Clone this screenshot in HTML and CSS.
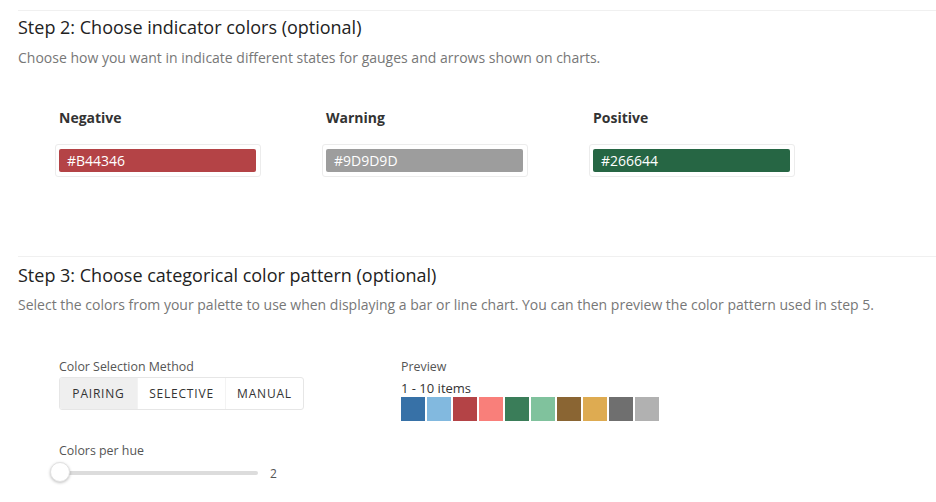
FILE: index.html
```html
<!DOCTYPE html>
<html>
<head>
<meta charset="utf-8">
<link rel="stylesheet" href="styles.css">
</head>
<body>
<div class="page">
  <section class="step step-first">
    <h2 class="step-title">Step 2: Choose indicator colors (optional)</h2>
    <p class="step-desc">Choose how you want in indicate different states for gauges and arrows shown on charts.</p>
    <div class="indicators">
      <div class="indicator">
        <div class="ind-label">Negative</div>
        <div class="ind-box"><div class="ind-swatch" style="background:#B44346">#B44346</div></div>
      </div>
      <div class="indicator">
        <div class="ind-label">Warning</div>
        <div class="ind-box"><div class="ind-swatch" style="background:#9D9D9D">#9D9D9D</div></div>
      </div>
      <div class="indicator">
        <div class="ind-label">Positive</div>
        <div class="ind-box"><div class="ind-swatch" style="background:#266644">#266644</div></div>
      </div>
    </div>
  </section>
  <section class="step step-second">
    <h2 class="step-title">Step 3: Choose categorical color pattern (optional)</h2>
    <p class="step-desc">Select the colors from your palette to use when displaying a bar or line chart. You can then preview the color pattern used in step 5.</p>
    <div class="controls">
      <div class="left-col">
        <div class="field-label">Color Selection Method</div>
        <div class="segmented">
          <div class="seg seg-active">PAIRING</div>
          <div class="seg">SELECTIVE</div>
          <div class="seg">MANUAL</div>
        </div>
        <div class="field-label field-label-gap">Colors per hue</div>
        <div class="slider-row">
          <div class="slider">
            <div class="track"></div>
            <div class="thumb"></div>
          </div>
          <div class="slider-value">2</div>
        </div>
      </div>
      <div class="right-col">
        <div class="field-label">Preview</div>
        <div class="items">1 - 10 items</div>
        <div class="palette">
          <span class="chip" style="background:#3771A7"></span>
          <span class="chip" style="background:#82B9DF"></span>
          <span class="chip" style="background:#B44346"></span>
          <span class="chip" style="background:#F97F7A"></span>
          <span class="chip" style="background:#3A7D59"></span>
          <span class="chip" style="background:#80C29D"></span>
          <span class="chip" style="background:#8A6533"></span>
          <span class="chip" style="background:#DEAB51"></span>
          <span class="chip" style="background:#6F6F6F"></span>
          <span class="chip" style="background:#B1B1B1"></span>
        </div>
      </div>
    </div>
  </section>
</div>
</body>
</html>
```

FILE: styles.css
```css
* { box-sizing: border-box; }
html, body { margin: 0; padding: 0; background: #fff; }
body {
  font-family: "Open Sans", "Noto Sans", sans-serif;
  color: #333;
  width: 936px;
  height: 502px;
  overflow: hidden;
}
.page { padding-top: 10px; }
.step {
  border-top: 1px solid #f0f0f0;
  margin-left: 18px;
}
.step-second { margin-top: 79px; }
.step-title {
  margin: 4px 0 0 0;
  font-size: 18px;
  line-height: 24px;
  font-weight: 400;
  color: #222;
}
.step-second .step-title { margin-top: 6px; }
.step-desc {
  margin: 10px 0 0 0;
  font-size: 14px;
  line-height: 18px;
  color: #777;
}
.step-second .step-desc { margin-top: 9px; }
.indicators {
  display: flex;
  gap: 61px;
  margin-top: 41px;
  padding-left: 37px;
}
.indicator { width: 206px; }
.ind-label {
  padding-left: 4px;
  font-size: 14px;
  line-height: 20px;
  font-weight: 700;
  color: #333;
}
.ind-box {
  margin-top: 16px;
  border: 1px solid #ececec;
  border-radius: 3px;
  padding: 4px 4px 4px 3px;
}
.ind-swatch {
  height: 23px;
  border-radius: 2px;
  color: #fff;
  font-size: 14px;
  line-height: 23px;
  padding-left: 8px;
}
.controls {
  display: flex;
  margin-top: 45px;
  padding-left: 41px;
}
.left-col { width: 342px; }
.field-label {
  font-size: 12.4px;
  line-height: 16px;
  color: #555;
}
.field-label-gap { margin-top: 33px; }
.segmented {
  display: inline-flex;
  margin-top: 2px;
  height: 33px;
  border: 1px solid #e6e6e6;
  border-radius: 3px;
  overflow: hidden;
}
.seg {
  display: flex;
  align-items: center;
  justify-content: center;
  font-size: 12px;
  letter-spacing: 0.8px;
  color: #333;
  border-left: 1px solid #f3f3f3;
}
.seg:nth-child(1) { width: 77px; border-left: 0; }
.seg:nth-child(2) { width: 88px; }
.seg:nth-child(3) { width: 78px; }
.seg-active { background: #efefef; }
.slider-row {
  display: flex;
  align-items: center;
  height: 20px;
  margin-top: 4px;
  margin-left: -2px;
}
.slider {
  position: relative;
  width: 201px;
  height: 20px;
}
.track {
  position: absolute;
  left: 0;
  right: 0;
  top: 8px;
  height: 4px;
  border-radius: 2px;
  background: #dcdcdc;
}
.thumb {
  position: absolute;
  left: -7px;
  top: -1px;
  width: 20px;
  height: 20px;
  border-radius: 50%;
  background: #fff;
  border: 1px solid #e2e2e2;
  box-shadow: 0 1px 3px rgba(0,0,0,0.25);
}
.slider-value {
  margin-left: 12px;
  font-size: 12px;
  color: #555;
}
.items {
  margin-top: 4px;
  font-size: 13px;
  line-height: 18px;
  color: #333;
}
.palette {
  display: flex;
  gap: 2px;
}
.chip {
  display: block;
  width: 24px;
  height: 24px;
}
```
